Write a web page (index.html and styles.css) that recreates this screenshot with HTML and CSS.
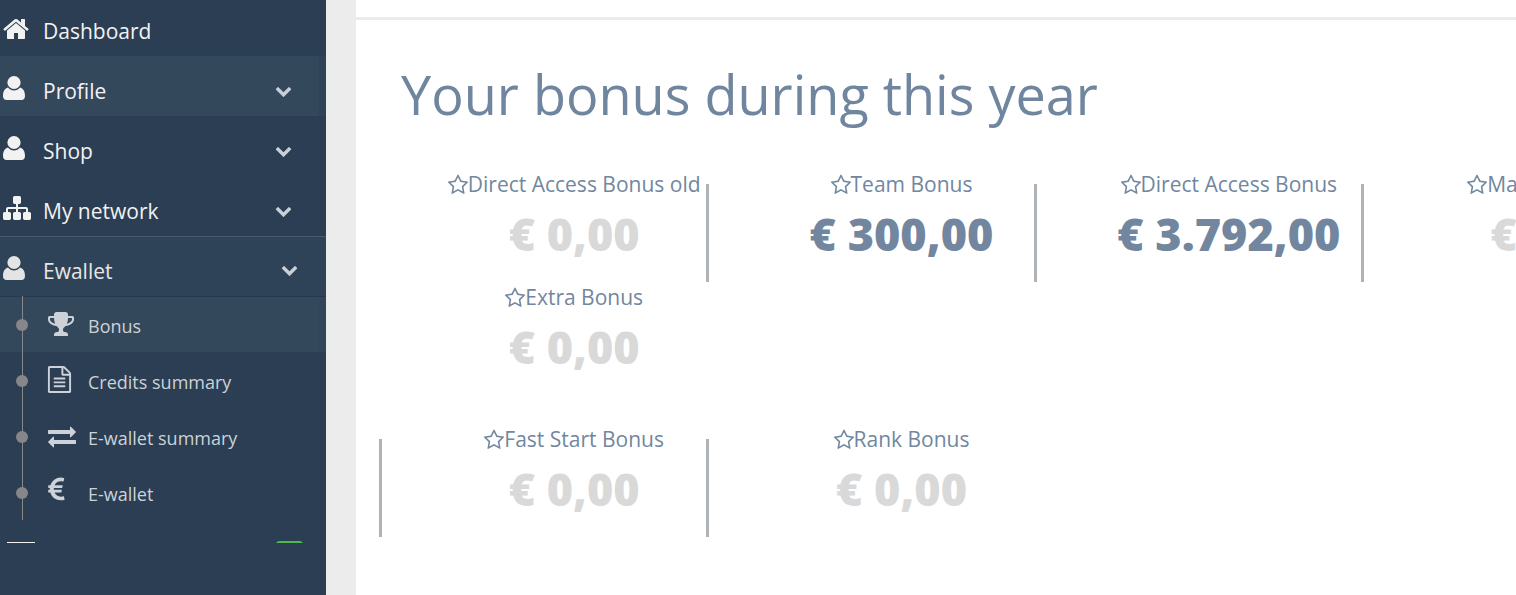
FILE: index.html
```html
<!DOCTYPE html>
<html lang="en">
<head>
  <meta charset="UTF-8">
  <title>Bonus</title>
  <link rel="stylesheet" href="styles.css">
</head>
<body>
  <svg class="defs" width="0" height="0">
    <symbol id="i-home" viewBox="0 0 1792 1792"><path d="M1472 992v480q0 26-19 45t-45 19h-384v-384h-256v384h-384q-26 0-45-19t-19-45v-480q0-1 .5-3t.5-3l575-474 575 474q1 2 1 6zm223-69l-62 74q-8 9-21 11h-3q-13 0-21-7l-692-577-692 577q-12 8-24 7-13-2-21-11l-62-74q-8-10-7-23.5t11-21.5l719-599q32-26 76-26t76 26l244 204v-195q0-14 9-23t23-9h192q14 0 23 9t9 23v408l219 182q10 8 11 21.5t-7 23.5z"/></symbol>
    <symbol id="i-user" viewBox="0 0 22 24"><ellipse cx="11" cy="6.5" rx="6.6" ry="6.5"/><path d="M5 11.5c1.5 2 3.6 3 6 3s4.500-1 6-3c3 .8 5 3.500 5 8.500 0 2.500-1.400 4-3.500 4h-15C1.400 24 0 22.500 0 20c0-5 2-7.700 5-8.500z"/></symbol>
    <symbol id="i-chevron" viewBox="0 0 1792 1792"><path d="M1683 808l-742 741q-19 19-45 19t-45-19l-742-741q-19-19-19-45.500t19-45.500l166-165q19-19 45-19t45 19l531 531 531-531q19-19 45-19t45 19l166 165q19 19 19 45.500t-19 45.500z"/></symbol>
    <symbol id="i-sitemap" viewBox="0 0 1792 1792"><path d="M1792 1248v320q0 40-28 68t-68 28h-320q-40 0-68-28t-28-68v-320q0-40 28-68t68-28h96v-192h-512v192h96q40 0 68 28t28 68v320q0 40-28 68t-68 28h-320q-40 0-68-28t-28-68v-320q0-40 28-68t68-28h96v-192h-512v192h96q40 0 68 28t28 68v320q0 40-28 68t-68 28h-320q-40 0-68-28t-28-68v-320q0-40 28-68t68-28h96v-192q0-52 38-90t90-38h512v-192h-96q-40 0-68-28t-28-68v-320q0-40 28-68t68-28h320q40 0 68 28t28 68v320q0 40-28 68t-68 28h-96v192h512q52 0 90 38t38 90v192h96q40 0 68 28t28 68z"/></symbol>
    <symbol id="i-trophy" viewBox="0 0 1792 1792"><path d="M522 883q-74-162-74-371h-256v96q0 78 94.500 162t235.500 113zm1078-275v-96h-256q0 209-74 371 141-29 235.500-113t94.500-162zm128-128v128q0 71-41.500 143t-112 130-173 97.500-215.500 44.500q-42 54-95 95-38 34-52.500 72.500t-14.500 89.500q0 54 30.500 91t97.500 37q75 0 133.500 45.500t58.500 114.500v64q0 14-9 23t-23 9h-832q-14 0-23-9t-9-23v-64q0-69 58.500-114.500t133.500-45.500q67 0 97.500-37t30.500-91q0-51-14.500-89.500t-52.500-72.500q-53-41-95-95-113-5-215.500-44.500t-173-97.500-112-130-41.500-143v-128q0-40 28-68t68-28h288v-96q0-66 47-113t113-47h576q66 0 113 47t47 113v96h288q40 0 68 28t28 68z"/></symbol>
    <symbol id="i-file" viewBox="0 0 1792 1792"><path d="M1596 380q28 28 48 76t20 88v1152q0 40-28 68t-68 28h-1344q-40 0-68-28t-28-68v-1600q0-40 28-68t68-28h896q40 0 88 20t76 48zm-444-244v376h376q-10-29-22-41l-313-313q-12-12-41-22zm384 1528v-1024h-416q-40 0-68-28t-28-68v-416h-768v1536h1280zm-1024-864q0-14 9-23t23-9h704q14 0 23 9t9 23v64q0 14-9 23t-23 9h-704q-14 0-23-9t-9-23v-64zm736 224q14 0 23 9t9 23v64q0 14-9 23t-23 9h-704q-14 0-23-9t-9-23v-64q0-14 9-23t23-9h704zm0 256q14 0 23 9t9 23v64q0 14-9 23t-23 9h-704q-14 0-23-9t-9-23v-64q0-14 9-23t23-9h704z"/></symbol>
    <symbol id="i-exchange" viewBox="0 0 1792 1792"><path d="M1792 1184v192q0 13-9.500 22.500t-22.500 9.500h-1376v192q0 13-9.500 22.500t-22.500 9.500q-12 0-24-10l-319-320q-9-9-9-22 0-14 9-23l320-320q9-9 23-9 13 0 22.500 9.500t9.500 22.500v192h1376q13 0 22.500 9.500t9.500 22.500zm0-544q0 14-9 23l-320 320q-9 9-23 9-13 0-22.500-9.500t-9.500-22.500v-192h-1376q-13 0-22.500-9.500t-9.500-22.500v-192q0-13 9.500-22.500t22.500-9.500h1376v-192q0-14 9-23t23-9q12 0 24 10l319 319q9 9 9 23z"/></symbol>
    <symbol id="i-eur" viewBox="0 0 1024 1792"><path d="M976 1277l35 159q3 12-3 22.500t-17 14.500l-5 1q-4 2-10.500 3.500t-16 4.500-21.500 5.500-25.500 5-30 5-33.500 4.500-36.500 3-38.500 1q-234 0-409-130.500t-238-351.500h-95q-13 0-22.500-9.500t-9.500-22.500v-113q0-13 9.500-22.500t22.500-9.500h66q-2-57 1-105h-67q-14 0-23-9t-9-23v-114q0-14 9-23t23-9h98q67-210 243.500-338t400.500-128q102 0 194 23 11 3 20 15 6 11 3 24l-43 159q-3 13-14 19.500t-24 2.500l-4-1q-4-1-11.500-2.500l-17.500-3.500-22.500-3.500-26-3-29-2.500-29.500-1q-126 0-226 64t-150 176h468q16 0 25 12 10 12 7 26l-24 114q-5 26-32 26h-488q-3 47 0 105h459q15 0 25 12 9 12 6 27l-24 112q-2 11-11 18.500t-20 7.500h-387q48 117 149.500 185.500t228.500 68.500q18 0 36-1.500t33.500-3.500 29.500-4.500 24.500-5 18.500-4.500l12-3 5-2q13-5 26 2 12 7 15 21z"/></symbol>
    <symbol id="i-star" viewBox="0 0 1792 1792"><path d="M1201 1004l306-297-422-62-189-382-189 382-422 62 306 297-73 421 378-199 377 199zm527-357q0 22-26 48l-363 354 86 500q1 7 1 20 0 50-41 50-19 0-40-12l-449-236-449 236q-22 12-40 12-21 0-31.500-14.500t-10.500-35.500q0-6 2-20l86-500-364-354q-25-27-25-48 0-37 56-46l502-73 225-455q19-41 49-41t49 41l225 455 502 73q56 9 56 46z"/></symbol>
  </svg>

  <aside class="sidebar">
    <nav class="nav">
      <a class="nav-item nav-first">
        <svg class="nav-icon icon-home"><use href="#i-home"/></svg>
        <span class="nav-text">Dashboard</span>
      </a>
      <a class="nav-item nav-hover">
        <svg class="nav-icon icon-user"><use href="#i-user"/></svg>
        <span class="nav-text">Profile</span>
        <svg class="chevron"><use href="#i-chevron"/></svg>
      </a>
      <a class="nav-item">
        <svg class="nav-icon icon-user"><use href="#i-user"/></svg>
        <span class="nav-text">Shop</span>
        <svg class="chevron"><use href="#i-chevron"/></svg>
      </a>
      <a class="nav-item">
        <svg class="nav-icon icon-sitemap"><use href="#i-sitemap"/></svg>
        <span class="nav-text">My network</span>
        <svg class="chevron"><use href="#i-chevron"/></svg>
      </a>
      <a class="nav-item nav-open">
        <svg class="nav-icon icon-user dim"><use href="#i-user"/></svg>
        <span class="nav-text">Ewallet</span>
        <svg class="chevron chevron-open"><use href="#i-chevron"/></svg>
      </a>
      <div class="submenu">
        <a class="sub-item sub-active">
          <svg class="sub-icon icon-trophy"><use href="#i-trophy"/></svg>
          <span>Bonus</span>
        </a>
        <a class="sub-item">
          <svg class="sub-icon icon-file"><use href="#i-file"/></svg>
          <span>Credits summary</span>
        </a>
        <a class="sub-item">
          <svg class="sub-icon icon-exchange"><use href="#i-exchange"/></svg>
          <span>E-wallet summary</span>
        </a>
        <a class="sub-item">
          <svg class="sub-icon icon-eur"><use href="#i-eur"/></svg>
          <span>E-wallet</span>
        </a>
      </div>
      <a class="nav-next">
        <span class="next-icon"></span>
        <span class="next-badge"></span>
      </a>
    </nav>
  </aside>

  <main class="content">
    <h1>Your bonus during this year</h1>

    <div class="bonus-grid">
      <div class="bonus bonus-line">
        <div class="bonus-label"><svg class="star"><use href="#i-star"/></svg>Direct Access Bonus old</div>
        <div class="bonus-value">€ 0,00</div>
      </div>
      <div class="bonus bonus-line">
        <div class="bonus-label"><svg class="star"><use href="#i-star"/></svg>Team Bonus</div>
        <div class="bonus-value earned">€ 300,00</div>
      </div>
      <div class="bonus bonus-line">
        <div class="bonus-label"><svg class="star"><use href="#i-star"/></svg>Direct Access Bonus</div>
        <div class="bonus-value earned">€ 3.792,00</div>
      </div>
      <div class="bonus">
        <div class="bonus-label"><svg class="star"><use href="#i-star"/></svg>Matching Bonus</div>
        <div class="bonus-value">€ 0,00</div>
      </div>
      <div class="bonus">
        <div class="bonus-label"><svg class="star"><use href="#i-star"/></svg>Extra Bonus</div>
        <div class="bonus-value">€ 0,00</div>
      </div>
    </div>

    <div class="bonus-grid bonus-grid-second">
      <div class="bonus bonus-line bonus-start">
        <div class="bonus-label"><svg class="star"><use href="#i-star"/></svg>Fast Start Bonus</div>
        <div class="bonus-value">€ 0,00</div>
      </div>
      <div class="bonus">
        <div class="bonus-label"><svg class="star"><use href="#i-star"/></svg>Rank Bonus</div>
        <div class="bonus-value">€ 0,00</div>
      </div>
    </div>
  </main>
</body>
</html>
```

FILE: styles.css
```css
html, body {
  height: 100%;
  margin: 0;
  overflow: hidden;
}

body {
  display: flex;
  font-family: "Open Sans", sans-serif;
  background-color: #ececec;
}

.defs {
  position: absolute;
}

/* sidebar */
.sidebar {
  flex: 0 0 326px;
  height: 100%;
  background-color: #2b3e53;
}

.nav {
  height: 543px;
  overflow: hidden;
}

.nav-item {
  display: flex;
  align-items: center;
  box-sizing: border-box;
  height: 60px;
  padding-top: 10px;
  color: #f2f2f2;
  font-size: 21px;
}

.nav-first {
  height: 56px;
  padding-top: 6px;
}

.nav-hover {
  background: linear-gradient(to right, #34485c 319px, #2f4358 319px);
}

.nav-open {
  height: 61px;
  padding-top: 8px;
  border-top: 1px solid #4a5a6b;
  border-bottom: 1px solid #26384b;
  background-color: #2f4358;
  color: #e6e6e6;
}

.nav-text {
  flex: 1;
  line-height: 30px;
}

.nav-icon {
  flex: none;
  margin-top: -6px;
  fill: #f2f2f2;
}

.nav-icon.dim {
  fill: #e4e4e4;
}

.icon-home {
  width: 28px;
  height: 28px;
  margin-top: -4px;
  margin-left: 2px;
  margin-right: 13px;
}

.icon-user {
  width: 22px;
  height: 24px;
  margin-left: 3px;
  margin-right: 18px;
}

.icon-sitemap {
  width: 28px;
  height: 28px;
  margin-left: 3px;
  margin-right: 12px;
}

.chevron {
  flex: none;
  width: 17px;
  height: 17px;
  margin-top: -2px;
  margin-right: 34px;
  fill: #c9cfd6;
}

.chevron-open {
  margin-right: 28px;
}

/* submenu with the timeline */
.submenu {
  position: relative;
}

.submenu::before {
  content: "";
  position: absolute;
  z-index: 1;
  top: -1px;
  left: 22px;
  bottom: 1px;
  width: 1px;
  background-color: #87888a;
}

.sub-item {
  position: relative;
  display: flex;
  align-items: center;
  box-sizing: border-box;
  height: 56px;
  padding-top: 2px;
  color: #ccd2d8;
  font-size: 18px;
}

.sub-item::before {
  content: "";
  position: absolute;
  z-index: 2;
  top: 22px;
  left: 16px;
  width: 12px;
  height: 12px;
  border-radius: 50%;
  background-color: #87868a;
}

.sub-item span {
  margin-left: 88px;
}

.sub-active {
  background: linear-gradient(to right, #34485c 319px, #32465b 319px) no-repeat;
  background-size: 100% 55px;
}

.sub-icon {
  position: absolute;
  fill: #ccd2d8;
}

.icon-trophy {
  top: 13px;
  left: 47px;
  width: 28px;
  height: 28px;
}

.icon-file {
  top: 13px;
  left: 46px;
  width: 27px;
  height: 27px;
}

.icon-exchange {
  top: 13px;
  left: 48px;
  width: 28px;
  height: 28px;
}

.icon-eur {
  top: 11px;
  left: 48px;
  width: 17px;
  height: 29px;
}

.nav-next {
  display: flex;
  justify-content: space-between;
  padding: 20px 22px 0 7px;
}

.next-icon {
  width: 28px;
  height: 20px;
  margin-top: 1px;
  border-top: 2px solid #f2f2f2;
}

.next-badge {
  width: 29px;
  height: 20px;
  border-radius: 5px;
  background-color: #4fb84f;
}

/* main area */
.content {
  flex: 1;
  min-width: 0;
  height: 100%;
  box-sizing: border-box;
  margin-left: 30px;
  padding-left: 26px;
  overflow: hidden;
  background-color: #fff;
}

.content::before {
  content: "";
  display: block;
  height: 3px;
  margin-top: 17px;
  margin-left: -26px;
  background-color: #e8ebef;
}

h1 {
  margin: 39px 0 0 19px;
  color: #70869e;
  font-size: 54px;
  font-weight: 400;
  line-height: 71px;
}

.bonus-grid {
  display: grid;
  grid-template-columns: repeat(4, 327.33px);
  grid-auto-rows: 98px;
  row-gap: 15px;
  margin-top: 54px;
}

.bonus-grid-second {
  margin-top: 44px;
}

.bonus {
  box-sizing: border-box;
  padding-left: 60px;
  border-right: 3px solid transparent;
  text-align: center;
  white-space: nowrap;
}

.bonus-line {
  border-right-color: #aeb3b7;
}

.bonus-start {
  width: 330.33px;
  margin-left: -3px;
  border-left: 3px solid #aeb3b7;
}

.bonus-label {
  height: 30px;
  margin-top: -15px;
  color: #7187a0;
  font-size: 21px;
  line-height: 30px;
}

.bonus-value {
  margin-top: 12px;
  color: #d9d9d9;
  font-size: 45px;
  font-weight: 800;
  line-height: 45px;
}

.bonus-value.earned {
  color: #72879f;
}

.star {
  width: 22px;
  height: 22px;
  margin: 0 -1px;
  vertical-align: -4px;
  fill: #7187a0;
}
```
